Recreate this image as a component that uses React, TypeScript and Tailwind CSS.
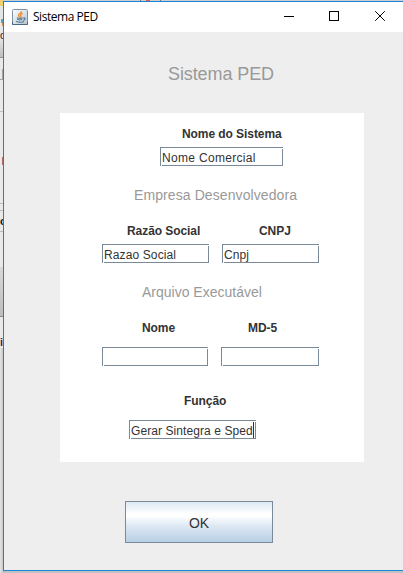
import React from "react";

type FieldProps = { className: string; value?: string; textClass?: string; caret?: boolean };

// Text field with the notched corners of the Java Metal theme
function Field({ className, value = "", textClass = "", caret = false }: FieldProps) {
  return (
    <div className={`relative h-[19px] shrink-0 border border-[#7a8a99] bg-white ${className}`}>
      <span className={`block pl-px text-[12px] leading-[21px] whitespace-nowrap text-[#333] ${textClass}`}>{value}</span>
      <span className="absolute -right-px top-0 size-px bg-white" />
      <span className="absolute -bottom-px left-0 size-px bg-white" />
      {caret && <span className="absolute right-px top-px h-[16px] w-px bg-[#333]" />}
    </div>
  );
}

function Label({ className, children }: { className: string; children: React.ReactNode }) {
  return <span className={`block shrink-0 text-[12px] leading-[14px] font-bold tracking-[-0.07px] whitespace-nowrap text-[#333] ${className}`}>{children}</span>;
}

function Section({ className, children }: { className: string; children: React.ReactNode }) {
  return <h2 className={`text-[14px] leading-[16px] whitespace-nowrap text-[#999] ${className}`}>{children}</h2>;
}

function JavaIcon() {
  return (
    <svg width="16" height="16" viewBox="0 0 16 16" className="shrink-0">
      <defs>
        <linearGradient id="tile" x1="0" y1="0" x2="1" y2="1">
          <stop offset="0" stopColor="#fff" />
          <stop offset="1" stopColor="#b4c3d0" />
        </linearGradient>
      </defs>
      <rect x=".5" y=".5" width="15" height="15" rx="1" fill="url(#tile)" stroke="#7d91a3" />
      <path d="M.5 13v2.5h15V13" fill="none" stroke="#4c687f" />
      <path d="M9.6 2.2C9.7 4 6.2 4.4 6.5 6.3c.1.8.9 1.1 1 2M10.7 4.3C8.6 5.2 8.1 6 8.8 6.8c.5.6.1 1.2-.5 1.7" fill="none" stroke="#ed8b2f" strokeWidth="1.3" />
      <path d="M4.8 8.8c1.5.6 4.4.6 6 0M5.2 10.5c1.5.5 3.7.5 5 0M4 12.6c2.5.8 6.2.7 8-.2M11.3 9c2.6-.6 2.1 2-.3 2.2" fill="none" stroke="#4f7592" strokeWidth="1.1" />
    </svg>
  );
}

// Sliver of the application that sits behind the dialog
function Backdrop() {
  return (
    <div className="flex h-[573px] w-[3px] shrink-0 flex-col overflow-hidden bg-[#e9e9e9] text-[11px] leading-[10px]">
      <div className="h-[6px] shrink-0 bg-[#f2cf70]" />
      <div className="h-[13px] shrink-0 bg-[#e3e5e7]" />
      <div className="ml-px h-[4px] w-[2px] shrink-0 bg-[#5ea1b8]" />
      <div className="ml-[2px] h-[3px] w-px shrink-0 bg-[#dc8945]" />
      <div className="h-[4px] shrink-0" />
      <div className="h-[9px] w-[3px] shrink-0 text-[#432235]">d</div>
      <div className="h-[18px] shrink-0 bg-linear-to-b from-[#e5e5e5] to-[#bdbdbd]" />
      <div className="h-px shrink-0 bg-[#929292]" />
      <div className="h-[11px] shrink-0" />
      <div className="h-[11px] shrink-0 border-r border-b border-[#a4a4a4]" />
      <div className="h-[31px] shrink-0" />
      <div className="h-px shrink-0 bg-[#c2c2c2]" />
      <div className="h-[45px] shrink-0" />
      <div className="ml-[2px] h-[8px] w-px shrink-0 bg-[#ac6b6b]" />
      <div className="h-[38px] shrink-0" />
      <div className="h-px shrink-0 bg-[#bababa]" />
      <div className="h-[6px] shrink-0" />
      <div className="h-px shrink-0 bg-[#bababa]" />
      <div className="h-[5px] shrink-0" />
      <div className="h-[10px] shrink-0 font-bold text-[#15131d]">c</div>
      <div className="h-[5px] shrink-0" />
      <div className="h-px shrink-0 bg-[#bababa]" />
      <div className="h-[35px] shrink-0" />
      <div className="h-[49px] shrink-0 bg-linear-to-b from-[#d9d9d9] to-[#bdbdbd]" />
      <div className="h-px shrink-0 bg-[#888]" />
      <div className="h-[20px] shrink-0" />
      <div className="h-[11px] shrink-0 font-bold text-[#5c164d]">i</div>
      <div className="flex-1 bg-linear-to-r from-[#e7e7e7] to-[#c6c6c6]" />
    </div>
  );
}

export default function App() {
  return (
    <div className="flex h-[573px] w-[403px] overflow-hidden bg-[#c2c2c2] font-['Liberation_Sans',Arial,sans-serif]">
      <Backdrop />
      <div className="flex h-[573px] w-[400px] shrink-0 flex-col">
        <div className="flex h-px shrink-0 bg-[#cfcfcf]">
          <span className="ml-[137px] h-px w-px bg-[#777]" />
          <span className="ml-[5px] h-px w-[4px] bg-[#e35f3c]" />
          <span className="ml-[10px] h-px w-px bg-[#777]" />
        </div>
        <main className="flex h-[570px] shrink-0 flex-col border-t border-b border-l border-[#1a82d7] bg-[#eee]">
          <header className="flex h-[30px] shrink-0 items-center bg-white pl-[8px]">
            <JavaIcon />
            <span className="ml-[5px] w-[68px] font-['Open_Sans',sans-serif] text-[12px] leading-[16px] tracking-[-0.46px] whitespace-nowrap text-black">Sistema PED</span>
            <svg width="102" height="12" viewBox="0 0 102 12" className="ml-[183px] shrink-0" fill="none" stroke="#000">
              <path d="M0 5.5h10" />
              <rect x="45.5" y=".5" width="9" height="9" />
              <path d="m91.2.2 9.6 9.6m0-9.6-9.6 9.6" />
            </svg>
          </header>

          <h1 className="mt-[32px] ml-[164px] h-[20px] shrink-0 text-[18px] leading-[20px] tracking-[-0.1px] whitespace-nowrap text-[#999]">Sistema PED</h1>

          <section className="mt-[29px] ml-[56px] flex h-[349px] w-[304px] shrink-0 flex-col bg-white">
            <Label className="mt-[14px] ml-[122px]">Nome do Sistema</Label>
            <Field className="mt-[6px] ml-[100px] w-[123px]" value="Nome Comercial" textClass="tracking-[0.32px]" />

            <Section className="mt-[21px] ml-[74px] tracking-[0.09px]">Empresa Desenvolvedora</Section>
            <div className="mt-[21px] flex">
              <Label className="ml-[67px] w-[132px]">Razão Social</Label>
              <Label className="">CNPJ</Label>
            </div>
            <div className="mt-[6px] ml-[42px] flex gap-[13px]">
              <Field className="w-[107px]" value="Razao Social" textClass="tracking-[0.12px]" />
              <Field className="w-[97px]" value="Cnpj" textClass="tracking-[0.1px]" />
            </div>

            <Section className="mt-[21px] ml-[82px]">Arquivo Executável</Section>
            <div className="mt-[21px] flex">
              <Label className="ml-[82px] w-[106px]">Nome</Label>
              <Label className="">MD-5</Label>
            </div>
            <div className="mt-[12px] ml-[42px] flex gap-[13px]">
              <Field className="w-[106px]" />
              <Field className="w-[98px]" />
            </div>

            <Label className="mt-[28px] ml-[124px]">Função</Label>
            <Field className="mt-[12px] ml-[69px] w-[127px]" value="Gerar Sintegra e Sped" textClass="tracking-[0.08px]" caret />
          </section>

          <button className="mt-[39px] ml-[121px] h-[42px] w-[148px] shrink-0 border border-[#7a8a99] bg-[linear-gradient(to_bottom,#dde8f3_0%,#fff_30%,#fff_35%,#dde8f3_60%,#b8cfe5_100%)] pt-[2px] text-[14px] leading-[16px] text-[#333]">OK</button>
        </main>
      </div>
    </div>
  );
}
